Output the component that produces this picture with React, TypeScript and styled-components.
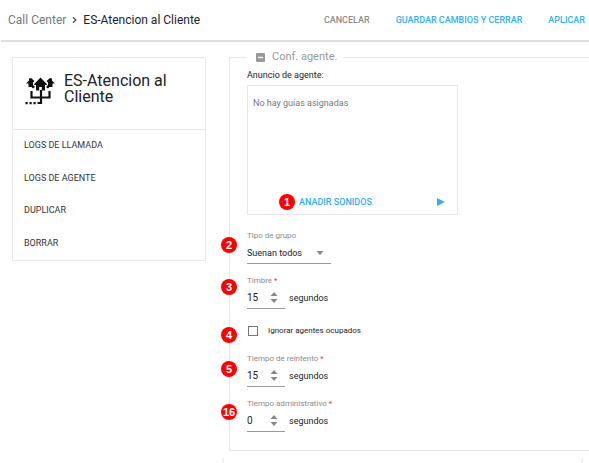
import React from "react";
import styled, { createGlobalStyle, css } from "styled-components";

const GlobalStyle = createGlobalStyle`
  *, *::before, *::after { box-sizing: border-box; }
  body {
    margin: 0;
    background: #fff;
    color: #222;
    font-family: Roboto, "Liberation Sans", sans-serif;
    font-size: 10px;
    overflow: hidden;
  }
  button, input, select { font: inherit; color: inherit; }
`;

const blue = "#35aef0";
const line = "#e8e8e8";

const TopBar = styled.header`
  display: flex;
  align-items: center;
  justify-content: space-between;
  height: 42px;
  margin-left: 1px;
  padding: 0 4px 0 7px;
  border-bottom: 2px solid #dedede;
`;

const Breadcrumb = styled.nav`
  display: flex;
  align-items: center;
  gap: 6px;
  font-size: 12px;
  line-height: 16px;
  white-space: nowrap;
`;

const CrumbLink = styled.a`
  color: #777;
  text-decoration: none;
`;

const Actions = styled.div`
  display: flex;
  gap: 26px;
`;

const TextButton = styled.button<{ $muted?: boolean }>`
  padding: 0;
  border: 0;
  background: none;
  color: ${(p) => (p.$muted ? "#8c8c8c" : blue)};
  font-size: 9px;
  font-weight: 500;
  line-height: 16px;
  white-space: nowrap;
  cursor: pointer;
`;

const Layout = styled.div`
  display: grid;
  grid-template-columns: 194px minmax(0, 1fr);
  gap: 16px;
  align-items: start;
  padding: 7px 0 0 12px;
`;

const SideCard = styled.aside`
  margin-top: 8px;
  border: 1px solid ${line};
`;

const CardHead = styled.div`
  display: flex;
  gap: 9px;
  height: 72px;
  padding: 15px 12px 0;
  border-bottom: 1px solid ${line};
`;

const CardTitle = styled.h1`
  margin: 0;
  font-size: 16px;
  font-weight: 400;
  line-height: 16px;
`;

const Menu = styled.ul`
  display: grid;
  grid-template-rows: repeat(4, 1fr);
  height: 130px;
  margin: 0;
  padding: 0 11px;
  list-style: none;
`;

const MenuLink = styled.a`
  display: block;
  color: #333;
  font-size: 9px;
  line-height: 30px;
  text-decoration: none;
`;

const Content = styled.main`
  min-width: 0;
`;

const Group = styled.fieldset`
  min-width: 0;
  margin: 0 0 0 7px;
  padding: 2px 0 18px 17px;
  border: 1px solid ${line};
  border-right: 0;
`;

const Legend = styled.legend`
  display: flex;
  align-items: center;
  gap: 7px;
  padding: 0 6px 0 9px;
  color: #999;
  font-size: 11px;
  line-height: 16px;
`;

const IconButton = styled.button`
  display: flex;
  padding: 0;
  border: 0;
  background: none;
  color: ${blue};
  cursor: pointer;
`;

const GroupLabel = styled.div`
  margin-bottom: 2px;
  font-size: 9px;
  line-height: 16px;
`;

const PromptBox = styled.div`
  display: flex;
  flex-direction: column;
  justify-content: space-between;
  max-width: 211px;
  height: 130px;
  margin-bottom: 15px;
  padding: 9px 12px 4px 5px;
  border: 1px solid ${line};
  color: #777;
  font-size: 9px;
  line-height: 16px;
`;

const PromptFooter = styled.div`
  display: flex;
  align-items: center;
  justify-content: space-between;
  padding-left: 26px;
`;

const Marker = styled.span<{ $top?: number }>`
  display: inline-flex;
  align-items: center;
  justify-content: center;
  width: 16px;
  height: 16px;
  border-radius: 50%;
  background: #f00;
  color: #fff;
  font: bold 11px/16px "Liberation Sans", sans-serif;
  ${(p) =>
    p.$top !== undefined &&
    css`
      position: absolute;
      left: -26px;
      top: ${p.$top}px;
    `}
`;

const Numbered = styled.div`
  display: flex;
  align-items: center;
  gap: 4px;
`;

const Fields = styled.div`
  display: flex;
  flex-direction: column;
  gap: 11px;
`;

const Field = styled.div`
  position: relative;
`;

const FieldLabel = styled.label`
  display: block;
  color: #8a8a8a;
  font-size: 8px;
  line-height: 12px;
`;

const Required = styled.span`
  color: #f33;
`;

const ControlLine = styled.div`
  display: flex;
  align-items: center;
  gap: 4px;
  font-size: 9px;
`;

const Underlined = styled.div<{ $wide?: boolean }>`
  display: flex;
  align-items: center;
  justify-content: space-between;
  width: ${(p) => (p.$wide ? 84 : 38)}px;
  height: 22px;
  padding-right: 7px;
  border-bottom: 1px solid #999;
`;

const SelectInput = styled.select`
  appearance: none;
  min-width: 0;
  flex: 1;
  padding: 0;
  border: 0;
  background: none;
  font-size: 9px;
  outline: 0;
`;

const NumberInput = styled.input`
  appearance: textfield;
  width: 20px;
  padding: 0;
  border: 0;
  background: none;
  font-size: 10px;
  outline: 0;
  &::-webkit-inner-spin-button { appearance: none; margin: 0; }
`;

const Stepper = styled.div`
  display: flex;
  flex-direction: column;
  gap: 3px;
  color: #888;
`;

const StepButton = styled(IconButton)`
  color: inherit;
`;

const CheckRow = styled.div`
  position: relative;
  display: flex;
  align-items: center;
  gap: 10px;
  height: 22px;
  padding-left: 1px;
  font-size: 8px;
  line-height: 12px;
`;

const CheckBox = styled.input`
  appearance: none;
  width: 10px;
  height: 10px;
  margin: 0;
  border: 1px solid #777;
  background: #fff;
  &:checked { background: ${blue}; }
`;

const NextPanel = styled.section`
  min-height: 5px;
  margin: 7px 6px 0 0;
  border: solid #f1f1f1;
  border-width: 0 2px;
`;

const Triangle = ({ down = false }: { down?: boolean }) => (
  <svg width="8" height="4" viewBox="0 0 8 4" aria-hidden="true">
    <path d={down ? "M0.5 0H7.5L4 4Z" : "M0.5 4H7.5L4 0Z"} fill="#888" />
  </svg>
);

const RoutingIcon = () => (
  <svg width="30" height="32" viewBox="0 0 30 32" fill="#111" aria-hidden="true">
    <path d="M15.5 4.5L21.8 11V12H20V17.5H16.8V14H14.2V17.5H11V12H9.2V11Z" />
    <path d="M6 5L9.5 8L8 9.5V12L10 14L8 15.5L6.5 14H3.5V10.5H1L4 7.5V5.5Z" />
    <path d="M25 5L21.5 8L23 9.5V12L21 14L23 15.5L24.5 14H27.5V10.5H30L27 7.5V5.5Z" />
    <path d="M6.5 18V24.5H24.5V18M16 17V30H12.5" fill="none" stroke="#111" strokeWidth="2.2" />
    <path d="M0.5 29h2.2v2.2h-2.2zM4.5 29h2.2v2.2h-2.2zM8.5 29h2.2v2.2h-2.2z" />
  </svg>
);

type NumberFieldProps = { id: string; label: string; value: number; marker: number; top: number };

function NumberField({ id, label, value, marker, top }: NumberFieldProps) {
  const [current, setCurrent] = React.useState(value);
  return (
    <Field>
      <Marker $top={top}>{marker}</Marker>
      <FieldLabel htmlFor={id}>
        {label} <Required>*</Required>
      </FieldLabel>
      <ControlLine>
        <Underlined>
          <NumberInput
            id={id}
            type="number"
            value={current}
            onChange={(e) => setCurrent(Number(e.target.value))}
          />
          <Stepper>
            <StepButton type="button" aria-label="Aumentar" onClick={() => setCurrent(current + 1)}>
              <Triangle />
            </StepButton>
            <StepButton type="button" aria-label="Reducir" onClick={() => setCurrent(current - 1)}>
              <Triangle down />
            </StepButton>
          </Stepper>
        </Underlined>
        <span>segundos</span>
      </ControlLine>
    </Field>
  );
}

const menuItems = ["LOGS DE LLAMADA", "LOGS DE AGENTE", "DUPLICAR", "BORRAR"];

export default function App() {
  return (
    <>
      <GlobalStyle />
      <TopBar>
        <Breadcrumb>
          <CrumbLink href="#call-center">Call Center</CrumbLink>
          <svg width="5" height="8" viewBox="0 0 5 8" aria-hidden="true">
            <path d="M1 1.2L3.8 4L1 6.8" fill="none" stroke="#555" strokeWidth="1.4" />
          </svg>
          <span>ES-Atencion al Cliente</span>
        </Breadcrumb>
        <Actions>
          <TextButton $muted>CANCELAR</TextButton>
          <TextButton>GUARDAR CAMBIOS Y CERRAR</TextButton>
          <TextButton>APLICAR</TextButton>
        </Actions>
      </TopBar>
      <Layout>
        <SideCard>
          <CardHead>
            <RoutingIcon />
            <CardTitle>
              ES-Atencion al
              <br />
              Cliente
            </CardTitle>
          </CardHead>
          <Menu>
            {menuItems.map((item) => (
              <li key={item}>
                <MenuLink href="#">{item}</MenuLink>
              </li>
            ))}
          </Menu>
        </SideCard>
        <Content>
          <Group>
            <Legend>
              <IconButton type="button" aria-label="Contraer">
                <svg width="9" height="9" viewBox="0 0 9 9">
                  <rect width="9" height="9" rx="1" fill="#999" />
                  <path d="M2 4.5H7" stroke="#fff" strokeWidth="1.4" />
                </svg>
              </IconButton>
              Conf. agente.
            </Legend>
            <GroupLabel>Anuncio de agente:</GroupLabel>
            <PromptBox>
              <span>No hay guías asignadas</span>
              <PromptFooter>
                <Numbered>
                  <Marker>1</Marker>
                  <TextButton>ANADIR SONIDOS</TextButton>
                </Numbered>
                <IconButton type="button" aria-label="Reproducir">
                  <svg width="8" height="8" viewBox="0 0 8 8">
                    <path d="M0 0L8 4L0 8Z" fill="currentColor" />
                  </svg>
                </IconButton>
              </PromptFooter>
            </PromptBox>
            <Fields>
              <Field>
                <Marker $top={7}>2</Marker>
                <FieldLabel htmlFor="tipo">Tipo de grupo</FieldLabel>
                <Underlined $wide>
                  <SelectInput id="tipo">
                    <option>Suenan todos</option>
                  </SelectInput>
                  <Triangle down />
                </Underlined>
              </Field>
              <NumberField id="timbre" label="Timbre" value={15} marker={3} top={4} />
              <CheckRow>
                <Marker $top={7}>4</Marker>
                <CheckBox type="checkbox" id="ignorar" />
                <label htmlFor="ignorar">Ignorar agentes ocupados</label>
              </CheckRow>
              <NumberField id="reintento" label="Tiempo de reintento" value={15} marker={5} top={8} />
              <NumberField id="admin" label="Tiempo administrativo" value={0} marker={16} top={6} />
            </Fields>
          </Group>
          <NextPanel />
        </Content>
      </Layout>
    </>
  );
}
